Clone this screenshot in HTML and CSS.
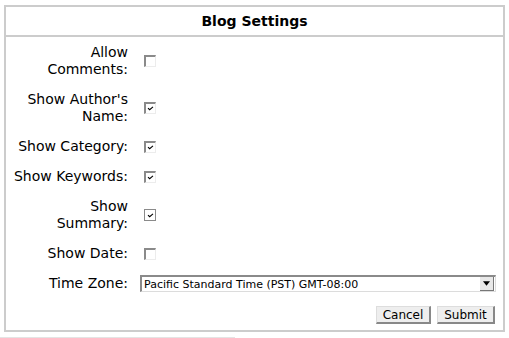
FILE: index.html
```html
<!DOCTYPE html>
<html lang="en">
<head>
    <meta charset="UTF-8">
    <title>Blog Settings</title>
    <link rel="stylesheet" href="styles.css">
</head>
<body>
    <div class="panel">
        <div class="panel-title">Blog Settings</div>
        <div class="form">
            <div class="row">
                <div class="label">Allow<br>Comments:</div>
                <div class="field"><span class="check"></span></div>
            </div>
            <div class="row">
                <div class="label">Show Author's<br>Name:</div>
                <div class="field"><span class="check checked"><svg viewBox="0 0 8 6"><path d="M1 2.5 L3 4.5 L7 1"/></svg></span></div>
            </div>
            <div class="row">
                <div class="label">Show Category:</div>
                <div class="field"><span class="check checked"><svg viewBox="0 0 8 6"><path d="M1 2.5 L3 4.5 L7 1"/></svg></span></div>
            </div>
            <div class="row">
                <div class="label">Show Keywords:</div>
                <div class="field"><span class="check checked"><svg viewBox="0 0 8 6"><path d="M1 2.5 L3 4.5 L7 1"/></svg></span></div>
            </div>
            <div class="row">
                <div class="label">Show<br>Summary:</div>
                <div class="field"><span class="check checked boxed"><svg viewBox="0 0 8 6"><path d="M1 2.5 L3 4.5 L7 1"/></svg></span></div>
            </div>
            <div class="row">
                <div class="label">Show Date:</div>
                <div class="field"><span class="check"></span></div>
            </div>
            <div class="row row-select">
                <div class="label">Time Zone:</div>
                <div class="field">
                    <div class="select">
                        <span class="select-text">Pacific Standard Time (PST) GMT-08:00</span>
                        <span class="select-arrow"><svg viewBox="0 0 8 5"><path d="M0 0 H8 L4 5 Z"/></svg></span>
                    </div>
                </div>
            </div>
            <div class="actions">
                <button class="btn btn-cancel">Cancel</button>
                <button class="btn btn-submit">Submit</button>
            </div>
        </div>
    </div>
    <div class="shadow-line"></div>
</body>
</html>
```

FILE: styles.css
```css
body {
    margin: 0;
    font-family: "DejaVu Sans", Verdana, sans-serif;
    font-size: 14px;
    color: #000;
    background-color: #fff;
}

.panel {
    margin: 5px 4px 0 4px;
    border: 2px solid #cccccc;
    height: 327px;
    box-sizing: border-box;
}

.panel-title {
    text-align: center;
    font-weight: bold;
    height: 28px;
    line-height: 28px;
    border-bottom: 2px solid #cccccc;
}

.row {
    display: grid;
    grid-template-columns: 122px 1fr;
    column-gap: 12px;
    align-items: center;
    padding: 7px 0 6px 0;
    line-height: 17px;
}

.row-select {
    padding-top: 7px;
}

.label {
    text-align: right;
}

.field {
    display: flex;
    align-items: center;
}

.check {
    display: inline-flex;
    align-items: center;
    justify-content: center;
    width: 12px;
    height: 12px;
    box-sizing: border-box;
    border-top: 2px solid #8a8a8a;
    border-left: 2px solid #8a8a8a;
    border-right: 1px solid #ececec;
    border-bottom: 1px solid #ececec;
    background-color: #fff;
    margin-left: 4px;
}

.check.boxed {
    border: 1px solid #8a8a8a;
}

.check svg {
    width: 7px;
    height: 5px;
    fill: none;
    stroke: #000;
    stroke-width: 1.3;
}

.select {
    display: flex;
    align-items: center;
    justify-content: space-between;
    width: 356px;
    height: 17px;
    box-sizing: border-box;
    border-top: 2px solid #8a8a8a;
    border-left: 2px solid #8a8a8a;
    border-right: 1px solid #dcdcdc;
    border-bottom: 1px solid #dcdcdc;
    font-size: 11px;
}

.select-text {
    padding-left: 2px;
}

.select-arrow {
    display: flex;
    align-items: center;
    justify-content: center;
    width: 13px;
    height: 13px;
    background-color: #e8e8e8;
    border-right: 1px solid #777;
    border-bottom: 1px solid #777;
    margin-right: 1px;
}

.select-arrow svg {
    width: 7px;
    height: 5px;
    fill: #000;
}

.actions {
    display: flex;
    justify-content: flex-end;
    gap: 6px;
    padding: 8px 8px 0 0;
}

.btn {
    font-family: "DejaVu Sans", Verdana, sans-serif;
    font-size: 12px;
    height: 18px;
    padding: 0;
    background-color: #eeeeee;
    border: 1px solid #dddddd;
    border-right: 2px solid #888;
    border-bottom: 2px solid #888;
    color: #000;
}

.btn-cancel {
    width: 55px;
}

.btn-submit {
    width: 58px;
}

.shadow-line {
    width: 235px;
    margin-top: 5px;
    border-top: 1px solid #e4e4e4;
}
```
